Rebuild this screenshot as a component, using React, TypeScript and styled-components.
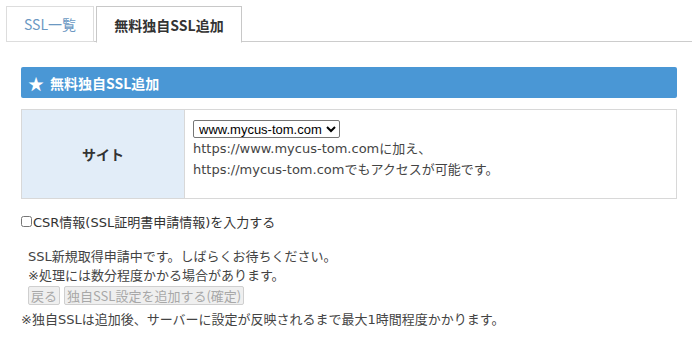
import React from 'react';
import styled, { createGlobalStyle } from 'styled-components';

const GlobalStyle = createGlobalStyle`
  body {
    margin: 0;
    background: #fff;
    font-family: "Noto Sans CJK JP", "Noto Sans", sans-serif;
    color: #333;
  }
`;

// Meiryo-like text: wide latin from DejaVu, kana/kanji from Noto CJK
const bodyFont = `"DejaVu Sans", "Noto Sans CJK JP", sans-serif`;

const Page = styled.div`
  width: 698px;
  height: 350px;
  padding-top: 6px;
  box-sizing: border-box;
`;

const TabBar = styled.div`
  display: flex;
  gap: 2px;
  margin: 0 6px;
  height: 35px;
  border-bottom: 1px solid #cccccc;
`;

const Tab = styled.div<{ $active?: boolean }>`
  display: flex;
  align-items: center;
  justify-content: center;
  width: ${(p) => (p.$active ? '144px' : '86px')};
  height: ${(p) => (p.$active ? '35px' : '34px')};
  border: 1px solid ${(p) => (p.$active ? '#c8c8c8' : '#dddddd')};
  border-bottom: ${(p) => (p.$active ? '1px solid #fff' : '1px solid #dddddd')};
  background: #fff;
  font-size: 14px;
  font-weight: ${(p) => (p.$active ? 700 : 400)};
  color: ${(p) => (p.$active ? '#333' : '#6b98c2')};
`;

const Content = styled.div`
  margin: 25px 21px 0;
`;

const SectionHeader = styled.div`
  display: flex;
  align-items: center;
  gap: 6px;
  height: 31px;
  padding-left: 7px;
  background: #4a97d5;
  border-radius: 2px;
  color: #fff;
  font-size: 14px;
  font-weight: 700;
`;

const Star = styled.span`
  font-size: 16px;
  line-height: 1;
`;

const FormTable = styled.div`
  display: grid;
  grid-template-columns: 163px 1fr;
  margin-top: 11px;
  border: 1px solid #d8d8d8;
  height: 90px;
  box-sizing: border-box;
`;

const LabelCell = styled.div`
  display: flex;
  align-items: center;
  justify-content: center;
  background: #e2edf8;
  border-right: 1px solid #d8d8d8;
  font-size: 14px;
  font-weight: 700;
  color: #333;
`;

const ValueCell = styled.div`
  padding: 10px 8px;
  font-family: ${bodyFont};
  font-size: 13px;
  line-height: 21px;
  color: #444;
`;

const Select = styled.select`
  display: block;
  height: 18px;
  padding: 0 1px;
  font-family: "Liberation Sans", Arial, sans-serif;
  font-size: 13px;
  color: #000;
  border: 1px solid #767676;
  border-radius: 2px;
  background: #fff;
`;

const CheckRow = styled.label`
  display: flex;
  align-items: center;
  margin-top: 13px;
  font-family: ${bodyFont};
  font-size: 13px;
  color: #333;
`;

const Checkbox = styled.input`
  width: 11px;
  height: 11px;
  margin: 0 1px 0 0;
`;

const Notice = styled.div`
  margin-top: 16px;
  padding-left: 7px;
  font-family: ${bodyFont};
  font-size: 13px;
  line-height: 19px;
  color: #444;
`;

const ButtonRow = styled.div`
  display: flex;
  gap: 4px;
  margin-top: 1px;
`;

const DisabledButton = styled.button`
  height: 19px;
  padding: 0 2px;
  font-family: "Noto Sans CJK JP", sans-serif;
  font-size: 13px;
  line-height: 1;
  color: #a8a8a8;
  background: #efefef;
  border: 1px solid #cfcfcf;
  border-radius: 2px;
`;

const Footnote = styled.div`
  margin-top: 4px;
  font-family: ${bodyFont};
  font-size: 13px;
  color: #444;
`;

const App: React.FC = () => {
  return (
    <Page>
      <GlobalStyle />
      <TabBar>
        <Tab>SSL一覧</Tab>
        <Tab $active>無料独自SSL追加</Tab>
      </TabBar>

      <Content>
        <SectionHeader>
          <Star>★</Star>
          無料独自SSL追加
        </SectionHeader>

        <FormTable>
          <LabelCell>サイト</LabelCell>
          <ValueCell>
            <Select defaultValue="www.mycus-tom.com">
              <option value="www.mycus-tom.com">www.mycus-tom.com</option>
            </Select>
            https://www.mycus-tom.comに加え、
            <br />
            https://mycus-tom.comでもアクセスが可能です。
          </ValueCell>
        </FormTable>

        <CheckRow>
          <Checkbox type="checkbox" />
          CSR情報(SSL証明書申請情報)を入力する
        </CheckRow>

        <Notice>
          SSL新規取得申請中です。しばらくお待ちください。
          <br />
          ※処理には数分程度かかる場合があります。
          <ButtonRow>
            <DisabledButton disabled>戻る</DisabledButton>
            <DisabledButton disabled>独自SSL設定を追加する(確定)</DisabledButton>
          </ButtonRow>
        </Notice>

        <Footnote>※独自SSLは追加後、サーバーに設定が反映されるまで最大1時間程度かかります。</Footnote>
      </Content>
    </Page>
  );
};

export default App;
